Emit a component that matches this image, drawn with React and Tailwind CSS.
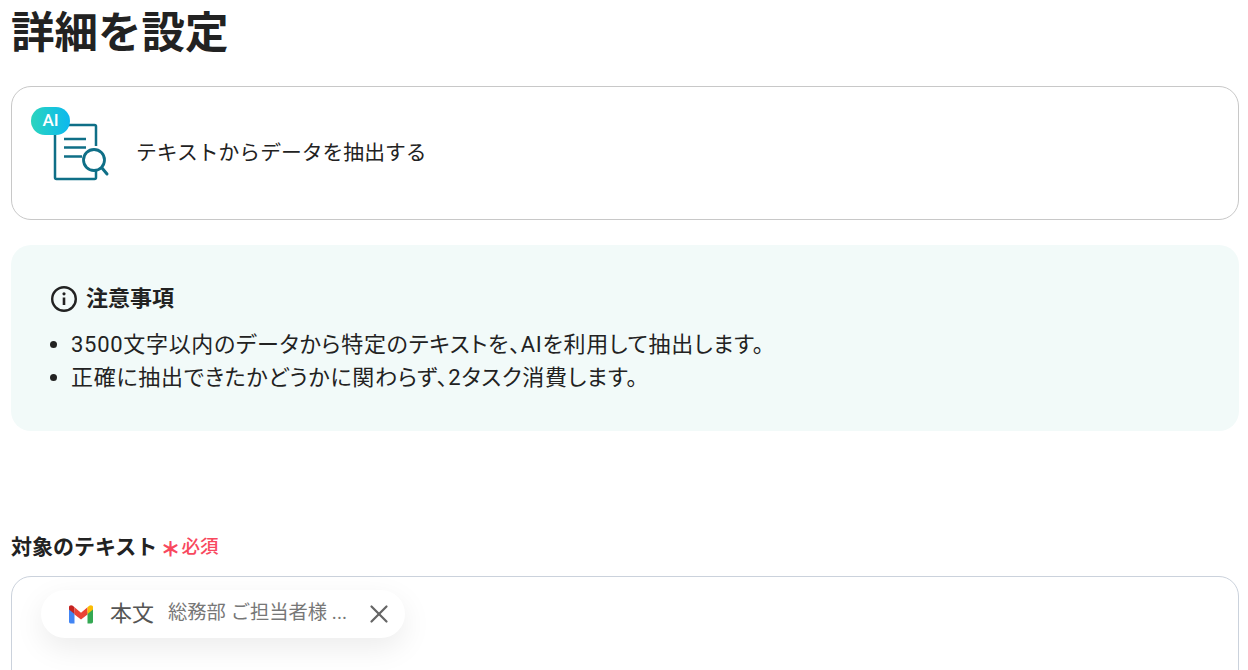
import React from 'react';
import { X } from 'lucide-react';

const jp = "font-['Roboto','Noto_Sans_CJK_JP',sans-serif]";

function DocIcon() {
    return (
        <div className="relative w-[80px] h-[76px] shrink-0">
            <svg width="80" height="76" viewBox="0 0 80 76" fill="none" className="absolute left-0 top-0">
                <path d="M65 39V19.500a1.500 1.500 0 0 0-1.500-1.500H25.500a1.500 1.500 0 0 0-1.500 1.500V70.500a1.500 1.500 0 0 0 1.500 1.500H63.500a1.500 1.500 0 0 0 1.500-1.500V63" stroke="#0f6f87" strokeWidth="2.500" />
                <path d="M33 32H55M33 40.500H55M33 49.500H51" stroke="#0f6f87" strokeWidth="2.500" />
                <circle cx="63" cy="53" r="10.500" fill="#fff" stroke="#0f6f87" strokeWidth="2.800" />
                <path d="M71 61L76 67" stroke="#0f6f87" strokeWidth="3" strokeLinecap="round" />
            </svg>
            <div className="absolute left-0 top-0 w-[39px] h-[28px] rounded-full bg-gradient-to-r from-[#2bd4bd] to-[#0db8ee] flex items-center justify-center text-white text-[17px] font-medium">AI</div>
        </div>
    );
}

function GmailIcon() {
    return (
        <svg width="26" height="19" viewBox="0 2.500 26 17" preserveAspectRatio="none" fill="none">
            <path d="M1 5.500V17.500A1.500 1.500 0 0 0 2.500 19H6.500V8.500Z" fill="#4285f4" />
            <path d="M19.500 8.500V19H23.500A1.500 1.500 0 0 0 25 17.500V5.500Z" fill="#34a853" />
            <path d="M1 4V6.500L6.500 10.500V4.500L4.800 3.200C3.200 2 1 3 1 4Z" fill="#c5221f" />
            <path d="M6.500 4.500V11L13 15.500L19.500 11V4.500L13 9.500Z" fill="#ea4335" />
            <path d="M19.500 4.500V10.500L25 6.500V4C25 3 22.800 2 21.200 3.200Z" fill="#fbbc04" />
        </svg>
    );
}

function InfoIcon() {
    return (
        <svg width="28" height="28" viewBox="0 0 28 28" fill="none">
            <circle cx="14" cy="14" r="11.800" stroke="#222" strokeWidth="2.400" />
            <circle cx="14" cy="8.800" r="1.600" fill="#222" />
            <path d="M14 12.500V20" stroke="#222" strokeWidth="2.600" />
        </svg>
    );
}

export default function App() {
    return (
        <div className={`h-[670px] overflow-hidden bg-white pl-[11px] pr-[9px] text-[#222] ${jp}`}>
            <h1 className="h-[66px] pt-[6px] text-[43.500px] leading-[56px] font-bold">詳細を設定</h1>

            {/* Selected action */}
            <div className="mt-[20px] h-[134px] rounded-[20px] border border-[#c8c8c8] flex items-start pl-[19px] pt-[20px]">
                <DocIcon />
                <p className="ml-[25px] mt-[31px] text-[20.800px] leading-[30px]">テキストからデータを抽出する</p>
            </div>

            {/* Notes */}
            <div className="mt-[25px] h-[186px] rounded-[20px] bg-[#f2faf9] pl-[39px] pt-[38px]">
                <div className="flex items-center gap-[8px] h-[30px] translate-y-[1px]">
                    <InfoIcon />
                    <span className="-mt-[1px] text-[22px] font-bold">注意事項</span>
                </div>
                <ul className="mt-[15px] -ml-[1px] text-[22px] leading-[33px] tracking-[0.700px]">
                    <li className="flex items-center">
                        <span className="w-[7px] h-[7px] rounded-full bg-[#222] ml-[1px] mr-[14px]" />
                        <span className="[font-feature-settings:'palt']">3500文字以内のデータから特定のテキストを、AIを利用して抽出します。</span>
                    </li>
                    <li className="flex items-center">
                        <span className="w-[7px] h-[7px] rounded-full bg-[#222] ml-[1px] mr-[14px]" />
                        <span className="[font-feature-settings:'palt']">正確に抽出できたかどうかに関わらず、2タスク消費します。</span>
                    </li>
                </ul>
            </div>

            {/* Target text field */}
            <div className="mt-[101px] flex items-center h-[32px]">
                <span className="text-[21px] font-bold">対象のテキスト</span>
                <span className="ml-[3px] text-[#f8485e] text-[20px] leading-[28px] mt-[4px] font-black">＊</span>
                <span className="ml-[1px] text-[#f8485e] text-[18.500px] font-medium">必須</span>
            </div>
            <div className="mt-[12px] h-[200px] rounded-[20px] border border-[#cbd2dc] pl-[29px] pt-[13px]">
                <div className="w-[364px] h-[48px] rounded-full bg-white shadow-[0_10px_30px_rgba(0,0,0,0.08)] flex items-center pl-[27px]">
                    <GmailIcon />
                    <span className="ml-[16px] -mt-[2px] text-[22px] text-[#555]">本文</span>
                    <span className="ml-[14px] -mt-[1px] text-[19.300px] text-[#777] whitespace-nowrap">総務部 ご担当者様 ...</span>
                    <X size={30} strokeWidth={1.800} className="ml-[17px] text-[#666]" />
                </div>
            </div>
        </div>
    );
}
